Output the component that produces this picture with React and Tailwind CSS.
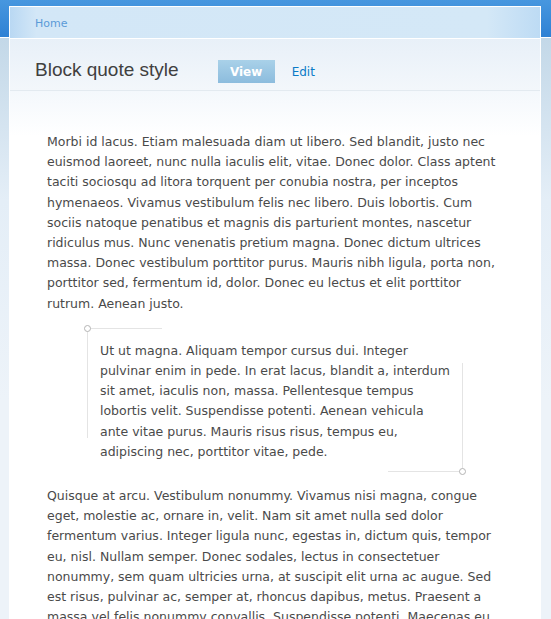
import React from 'react';

const bodyFont = "font-['DejaVu_Sans',Verdana,sans-serif]";

const firstPara = [
  'Morbi id lacus. Etiam malesuada diam ut libero. Sed blandit, justo nec',
  'euismod laoreet, nunc nulla iaculis elit, vitae. Donec dolor. Class aptent',
  'taciti sociosqu ad litora torquent per conubia nostra, per inceptos',
  'hymenaeos. Vivamus vestibulum felis nec libero. Duis lobortis. Cum',
  'sociis natoque penatibus et magnis dis parturient montes, nascetur',
  'ridiculus mus. Nunc venenatis pretium magna. Donec dictum ultrices',
  'massa. Donec vestibulum porttitor purus. Mauris nibh ligula, porta non,',
  'porttitor sed, fermentum id, dolor. Donec eu lectus et elit porttitor',
  'rutrum. Aenean justo.',
];

const quote = [
  'Ut ut magna. Aliquam tempor cursus dui. Integer',
  'pulvinar enim in pede. In erat lacus, blandit a, interdum',
  'sit amet, iaculis non, massa. Pellentesque tempus',
  'lobortis velit. Suspendisse potenti. Aenean vehicula',
  'ante vitae purus. Mauris risus risus, tempus eu,',
  'adipiscing nec, porttitor vitae, pede.',
];

const lastPara = [
  'Quisque at arcu. Vestibulum nonummy. Vivamus nisi magna, congue',
  'eget, molestie ac, ornare in, velit. Nam sit amet nulla sed dolor',
  'fermentum varius. Integer ligula nunc, egestas in, dictum quis, tempor',
  'eu, nisl. Nullam semper. Donec sodales, lectus in consectetuer',
  'nonummy, sem quam ultricies urna, at suscipit elit urna ac augue. Sed',
  'est risus, pulvinar ac, semper at, rhoncus dapibus, metus. Praesent a',
  'massa vel felis nonummy convallis. Suspendisse potenti. Maecenas eu',
  'lorem. Aliquam erat volutpat.',
];

// keeps the wrapping of the original page
function Lines({ lines }) {
  return lines.map((line, i) => (
    <React.Fragment key={i}>
      {line}
      {i < lines.length - 1 && <br />}
    </React.Fragment>
  ));
}

function QuoteBlock({ lines }) {
  return (
    <blockquote className="relative mx-[40px] mt-[14px] mb-[14px] pl-[13px] pr-[10px] pt-[13px] pb-[10px]">
      {/* corner decorations */}
      <span className="absolute left-0 top-0 w-px h-[110px] bg-[#e4e4e4]" />
      <span className="absolute left-0 top-0 w-[75px] h-px bg-[#e4e4e4]" />
      <span className="absolute left-[-3px] top-[-3px] w-[7px] h-[7px] rounded-full border border-[#b4b4b4] bg-white" />
      <span className="absolute right-0 bottom-0 w-px h-[109px] bg-[#e4e4e4]" />
      <span className="absolute right-0 bottom-0 w-[75px] h-px bg-[#e4e4e4]" />
      <span className="absolute right-[-3px] bottom-[-3px] w-[7px] h-[7px] rounded-full border border-[#b4b4b4] bg-white" />
      <p className="whitespace-nowrap">
        <Lines lines={lines} />
      </p>
    </blockquote>
  );
}

export default function App() {
  return (
    <div
      className={`h-[619px] pt-[6px] overflow-hidden bg-[linear-gradient(180deg,#4797df_0px,#2f81d4_37px,#ffffff_37px,#ffffff_38px,#c3d8e8_38px,#e4eef7_200px,#edf3f9_400px)] ${bodyFont}`}
    >
      <div className="ml-[9px] mr-[10px] border-x border-t border-white/70 bg-white">
        {/* breadcrumb */}
        <div className="h-[32px] flex items-center pl-[25px] pt-[3px] border-b border-white bg-[linear-gradient(90deg,#b9d8f3_0%,#d3e7f7_5%,#d4e8f7_90%,#bddbf4_100%)]">
          <a href="#" className="text-[11px] text-[#5b9bd8]">Home</a>
        </div>

        {/* title + tabs */}
        <div className="h-[52px] flex items-end pb-[7px] pl-[25px] border-b border-[#e3eaf0] bg-[linear-gradient(180deg,#e8f0f8,#f3f7fb)]">
          <div className="h-[23px] flex items-center">
            <h1 className="font-['Liberation_Sans',Arial,sans-serif] text-[19px] leading-[23px] -mt-[4px] text-[#404040]">Block quote style</h1>
            <span className="ml-[39px] w-[57px] h-[23px] flex items-center justify-center text-[12px] font-bold text-white bg-[linear-gradient(180deg,#a9d1e9,#8cbcdd)]">
              View
            </span>
            <a href="#" className="ml-[17px] text-[12px] text-[#0a7bc7]">Edit</a>
          </div>
        </div>

        {/* content */}
        <div className="px-[37px] pt-[41px] pb-[20px] text-[12.5px] leading-[20.2px] text-[#4a4a4a] bg-[linear-gradient(180deg,#f4f8fc_0px,#ffffff_45px)]">
          <p className="whitespace-nowrap">
            <Lines lines={firstPara} />
          </p>
          <QuoteBlock lines={quote} />
          <p className="whitespace-nowrap">
            <Lines lines={lastPara} />
          </p>
        </div>
      </div>
    </div>
  );
}
